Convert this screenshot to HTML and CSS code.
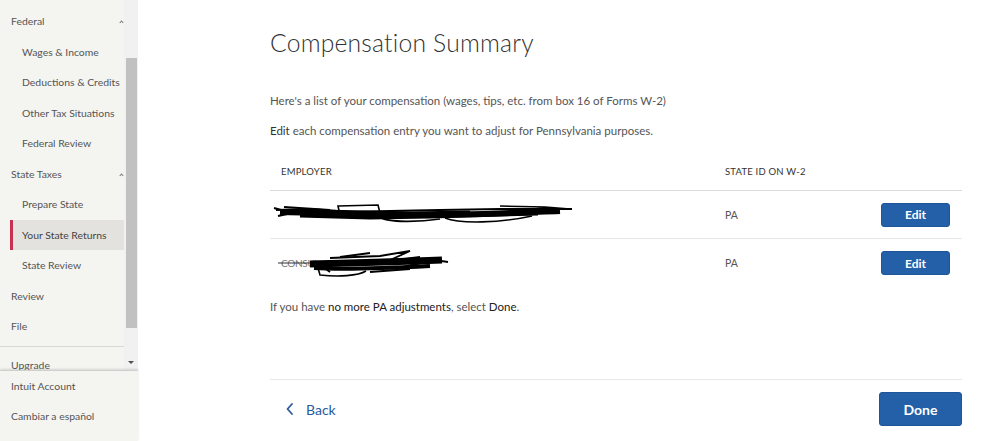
FILE: index.html
```html
<!DOCTYPE html>
<html lang="en">
<head>
<meta charset="utf-8">
<title>Compensation Summary</title>
<link rel="stylesheet" href="styles.css">
</head>
<body>
<div class="app">
  <aside class="sidebar">
    <div class="sidebar-scroll">
      <nav class="nav">
        <div class="item top">Federal<span class="caret"></span></div>
        <div class="item sub">Wages &amp; Income</div>
        <div class="item sub">Deductions &amp; Credits</div>
        <div class="item sub">Other Tax Situations</div>
        <div class="item sub">Federal Review</div>
        <div class="item top">State Taxes<span class="caret"></span></div>
        <div class="item sub">Prepare State</div>
        <div class="item sub active">Your State Returns</div>
        <div class="item sub">State Review</div>
        <div class="item top">Review</div>
        <div class="item top">File</div>
        <div class="nav-divider"></div>
        <div class="item top upgrade">Upgrade</div>
      </nav>
      <div class="scrollbar">
        <div class="thumb"></div>
        <div class="arrow"></div>
      </div>
    </div>
    <div class="sidebar-footer">
      <div class="item top">Intuit Account</div>
      <div class="item top">Cambiar a español</div>
    </div>
  </aside>
  <main class="main">
    <div class="content">
      <h1 class="title">Compensation Summary</h1>
      <p class="lead">Here's a list of your compensation (wages, tips, etc. from box 16 of Forms W-2)</p>
      <p class="lead second"><span class="strong">Edit</span> each compensation entry you want to adjust for Pennsylvania purposes.</p>
      <div class="table">
        <div class="row head">
          <div class="cell emp">EMPLOYER</div>
          <div class="cell">STATE ID ON W-2</div>
          <div class="cell"></div>
        </div>
        <div class="row body">
          <div class="cell emp">
            <svg class="scribble" width="310" height="48" viewBox="0 0 310 48">
              <path d="M6 19 L40 18 L80 21 L120 20 L170 19 L230 18 L302 18" stroke="#000" stroke-width="2" fill="none"/>
              <path d="M10 21 C60 22 100 24 150 24 C200 24 240 22 290 20" stroke="#000" stroke-width="6" fill="none"/>
              <path d="M30 24 L100 26 L160 25 L230 23 L268 22" stroke="#000" stroke-width="5" fill="none"/>
              <path d="M68 15 L108 14 L110 22 L70 24 Z" stroke="#000" stroke-width="1.6" fill="none"/>
              <path d="M110 26 C118 32 150 31 170 28 M175 27 C190 33 230 32 262 25" stroke="#000" stroke-width="1.6" fill="none"/>
              <path d="M4 17 L22 22 L8 25 M14 16 L60 19" stroke="#000" stroke-width="2" fill="none"/>
              <path d="M230 15 L275 16 L300 18 M240 19 L280 17" stroke="#000" stroke-width="1.6" fill="none"/>
              <path d="M50 20 L140 22 L200 21" stroke="#000" stroke-width="3" fill="none"/>
            </svg>
          </div>
          <div class="cell state">PA</div>
          <div class="cell act"><button class="btn edit">Edit</button></div>
        </div>
        <div class="row body last">
          <div class="cell emp">
            <span class="hidden-name">CONSU</span>
            <svg class="scribble" width="190" height="48" viewBox="0 0 190 48">
              <path d="M8 24 L42 24" stroke="#333" stroke-width="1" fill="none"/>
              <path d="M40 25 C80 24 120 23 172 21" stroke="#000" stroke-width="7" fill="none"/>
              <path d="M44 29 C80 31 120 29 160 27" stroke="#000" stroke-width="4" fill="none"/>
              <path d="M48 29 L50 36 C68 38 88 37 96 32" stroke="#000" stroke-width="1.6" fill="none"/>
              <path d="M60 19 L110 17 L140 12 L118 22 L150 18" stroke="#000" stroke-width="1.8" fill="none"/>
              <path d="M128 29 L165 21 L178 23 M100 33 L140 30" stroke="#000" stroke-width="2" fill="none"/>
              <path d="M70 18 L100 14 M45 22 L60 33" stroke="#000" stroke-width="2" fill="none"/>
            </svg>
          </div>
          <div class="cell state">PA</div>
          <div class="cell act"><button class="btn edit">Edit</button></div>
        </div>
      </div>
      <p class="lead closing">If you have <span class="strong">no more PA adjustments</span>, select <span class="strong">Done</span>.</p>
      <div class="footer">
        <a class="back" href="#">
          <svg width="10" height="14" viewBox="0 0 10 14"><path d="M7 2 L2.5 7 L7 12" stroke="#2a5b9e" stroke-width="1.8" fill="none" stroke-linecap="round" stroke-linejoin="round"/></svg>
          <span>Back</span>
        </a>
        <button class="btn done">Done</button>
      </div>
    </div>
  </main>
</div>
</body>
</html>
```
FILE: styles.css
```css
* { box-sizing: border-box; }
html, body { margin: 0; padding: 0; }
body {
  font-family: "Lato", "Open Sans", "Liberation Sans", sans-serif;
  background: #fff;
  color: #444;
}
.app { display: flex; height: 441px; overflow: hidden; }

.sidebar {
  width: 138px;
  flex: none;
  background: #f4f4f1;
  display: flex;
  flex-direction: column;
}
.sidebar-scroll { height: 370px; display: flex; overflow: hidden; }
.nav { width: 124px; padding-top: 6px; flex: none; overflow: hidden; }
.item {
  height: 30.5px;
  display: flex;
  align-items: center;
  font-size: 10.4px;
  color: #555;
  white-space: nowrap;
  position: relative;
}
.item.top { padding-left: 11px; }
.item.sub { padding-left: 22px; }
.item.active {
  margin-left: 10px;
  padding-left: 9px;
  background: #e3e2de;
  border-left: 3px solid #c9304f;
  color: #444;
}
.item.upgrade { padding-top: 6px; }
.caret {
  position: absolute;
  right: 1px;
  top: 15px;
  width: 3px;
  height: 3px;
  border-top: 1px solid #777;
  border-right: 1px solid #777;
  transform: rotate(-45deg);
}
.nav-divider { height: 1px; background: #d9d9d6; margin-top: 4px; }
.scrollbar {
  width: 14px;
  background: #f1f1f1;
  position: relative;
  flex: none;
}
.thumb {
  margin: 58px 1px 0 2px;
  height: 270px;
  background: #c1c1c1;
}
.arrow {
  position: absolute;
  left: 4px;
  top: 361px;
  width: 0; height: 0;
  border-left: 3px solid transparent;
  border-right: 3px solid transparent;
  border-top: 3px solid #505050;
}
.sidebar-footer {
  flex: 1;
  border-top: 1px solid #cfcfcc;
  box-shadow: 0 -1px 2px rgba(0,0,0,0.12);
  background: #f4f4f1;
  position: relative;
}
.sidebar-footer .item { height: 30px; }

.main { flex: 1; display: flex; }
.content {
  width: 692px;
  margin-left: 132px;
  padding-top: 28px;
  display: flex;
  flex-direction: column;
}
.title {
  margin: 0;
  font-size: 24.7px;
  line-height: 30px;
  font-weight: 300;
  color: #333;
  letter-spacing: 0.2px;
}
.lead {
  margin: 35px 0 0;
  font-size: 11.5px;
  line-height: 16px;
  color: #555;
}
.lead.second { margin-top: 14px; }
.strong { color: #333; font-weight: 400; }
.closing .strong { color: #222; }

.table { margin-top: 13px; }
.row {
  display: grid;
  grid-template-columns: 455px 1fr auto;
  align-items: center;
}
.row.head { height: 39px; border-bottom: 1px solid #dcdcdc; }
.row.head .cell { font-size: 9.5px; color: #333; letter-spacing: 0.2px; }
.row.body { height: 48px; border-bottom: 1px solid #e6e6e6; }
.row.body.last { border-bottom: none; }
.cell.emp { padding-left: 11px; position: relative; height: 100%; display: flex; align-items: center; }
.cell.state { font-size: 10.5px; color: #555; }
.cell.act { padding-right: 12px; }
.scribble { position: absolute; left: 0; top: 0; }
.hidden-name { font-size: 10px; color: #777; letter-spacing: -0.3px; }

.btn {
  font-family: "Lato", "Liberation Sans", sans-serif;
  font-weight: 700;
  color: #fff;
  background: #2360a8;
  border: 1px solid #1d5598;
  border-radius: 3px;
  cursor: pointer;
}
.btn.edit { width: 69px; height: 24px; font-size: 12px; }
.closing { margin-top: 12px; }

.footer {
  margin-top: auto;
  border-top: 1px solid #e8e8e8;
  padding: 12px 0 15px;
  display: flex;
  justify-content: space-between;
  align-items: center;
}
.back {
  display: flex;
  align-items: center;
  gap: 11px;
  padding-left: 15px;
  color: #2a5b9e;
  text-decoration: none;
  font-size: 14px;
  font-weight: 400;
}
.btn.done { width: 83px; height: 34px; font-size: 14px; }
```
